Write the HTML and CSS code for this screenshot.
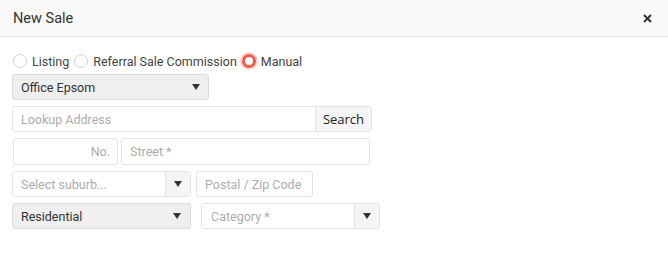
FILE: index.html
```html
<!DOCTYPE html>
<html lang="en">
<head>
    <meta charset="UTF-8">
    <title>New Sale</title>
    <link rel="stylesheet" href="styles.css">
</head>
<body>
    <div class="modal">
        <!-- Header -->
        <div class="modal-header">
            <span class="modal-title">New Sale</span>
            <span class="close-btn">
                <svg width="9" height="9" viewBox="0 0 9 9"><path d="M1 1 L8 8 M8 1 L1 8" stroke="#333" stroke-width="2"/></svg>
            </span>
        </div>

        <!-- Form -->
        <div class="modal-body">
            <div class="radio-row">
                <label class="radio"><span class="radio-dot"></span>Listing</label>
                <label class="radio"><span class="radio-dot"></span>Referral Sale Commission</label>
                <label class="radio"><span class="radio-dot checked"></span>Manual</label>
            </div>

            <div class="row">
                <div class="select office">
                    <span>Office Epsom</span>
                    <span class="caret"></span>
                </div>
            </div>

            <div class="row">
                <div class="input-group lookup">
                    <input type="text" placeholder="Lookup Address">
                    <button class="search-btn">Search</button>
                </div>
            </div>

            <div class="row tall">
                <input type="text" class="field number" placeholder="No.">
                <input type="text" class="field street" placeholder="Street *">
            </div>

            <div class="row">
                <div class="input-group suburb">
                    <input type="text" placeholder="Select suburb...">
                    <span class="addon"><span class="caret"></span></span>
                </div>
                <input type="text" class="field postal" placeholder="Postal / Zip Code">
            </div>

            <div class="row wide-gap">
                <div class="select residential">
                    <span>Residential</span>
                    <span class="caret"></span>
                </div>
                <div class="input-group category">
                    <input type="text" placeholder="Category *">
                    <span class="addon"><span class="caret"></span></span>
                </div>
            </div>
        </div>
    </div>
</body>
</html>
```
FILE: styles.css
```css
* {
    box-sizing: border-box;
}

body {
    margin: 0;
    background-color: #fff;
    color: #333;
    font-family: Roboto, "Liberation Sans", sans-serif;
    font-size: 12.5px;
}

.modal-header {
    height: 37px;
    display: flex;
    align-items: center;
    justify-content: space-between;
    padding: 0 16px 0 13px;
    background-color: #f9f9f9;
    border-bottom: 1px solid #e5e5e5;
}

.modal-title {
    font-size: 14.5px;
    color: #333;
}

.close-btn {
    display: flex;
    align-items: center;
}

.modal-body {
    display: flex;
    flex-direction: column;
    gap: 6px;
    padding: 15px 12px 0 12px;
}

/* Radio buttons */
.radio-row {
    display: flex;
    align-items: center;
    height: 18px;
    margin-bottom: -2px;
    color: #444;
}

.radio {
    display: flex;
    align-items: center;
    margin-right: 4px;
}

.radio-dot {
    width: 14px;
    height: 14px;
    border: 1px solid #d4d4d4;
    border-radius: 50%;
    margin: 0 5px 0 1px;
    background-color: #fff;
}

.radio-dot.checked {
    border: 3.5px solid #f4594b;
    box-shadow: 0 0 0 2px rgba(244, 89, 75, 0.25);
}

.row {
    display: flex;
    gap: 3px;
    height: 26px;
}

.row.tall {
    height: 27px;
}

.row.wide-gap {
    gap: 10px;
}

/* Selects */
.select {
    display: flex;
    align-items: center;
    justify-content: space-between;
    height: 100%;
    padding: 0 8px;
    background-color: #efefef;
    border: 1px solid #dcdcdc;
    border-radius: 3px;
    color: #333;
}

.office {
    width: 197px;
}

.residential {
    width: 179px;
    padding-right: 9px;
}

.caret {
    width: 0;
    height: 0;
    border-left: 4px solid transparent;
    border-right: 4px solid transparent;
    border-top: 6px solid #333;
}

/* Inputs */
input {
    font-family: Roboto, "Liberation Sans", sans-serif;
    font-size: 12.5px;
    color: #333;
    outline: none;
}

input::placeholder {
    color: #acacac;
}

.field {
    height: 100%;
    padding: 0 8px;
    border: 1px solid #e3e3e3;
    border-radius: 3px;
    background-color: #fff;
}

.number {
    width: 105px;
    margin-left: 1px;
    text-align: right;
    padding-right: 7px;
}

.street {
    width: 249px;
}

.postal {
    width: 117px;
    margin-left: 2px;
}

.input-group {
    display: flex;
    height: 100%;
    border: 1px solid #e3e3e3;
    border-radius: 3px;
    overflow: hidden;
}

.input-group input {
    flex: 1;
    min-width: 0;
    border: none;
    padding: 0 8px;
    background-color: #fff;
}

.lookup {
    width: 360px;
}

.search-btn {
    width: 56px;
    border: none;
    border-left: 1px solid #e3e3e3;
    background-color: #f5f5f5;
    color: #222;
    font-family: "Open Sans", sans-serif;
    font-size: 13px;
    padding: 0;
}

.suburb {
    width: 179px;
}

.category {
    width: 179px;
}

.category input {
    padding-left: 9px;
}

.addon {
    width: 25px;
    display: flex;
    align-items: center;
    justify-content: center;
    border-left: 1px solid #e3e3e3;
    background-color: #f5f5f5;
}
```
